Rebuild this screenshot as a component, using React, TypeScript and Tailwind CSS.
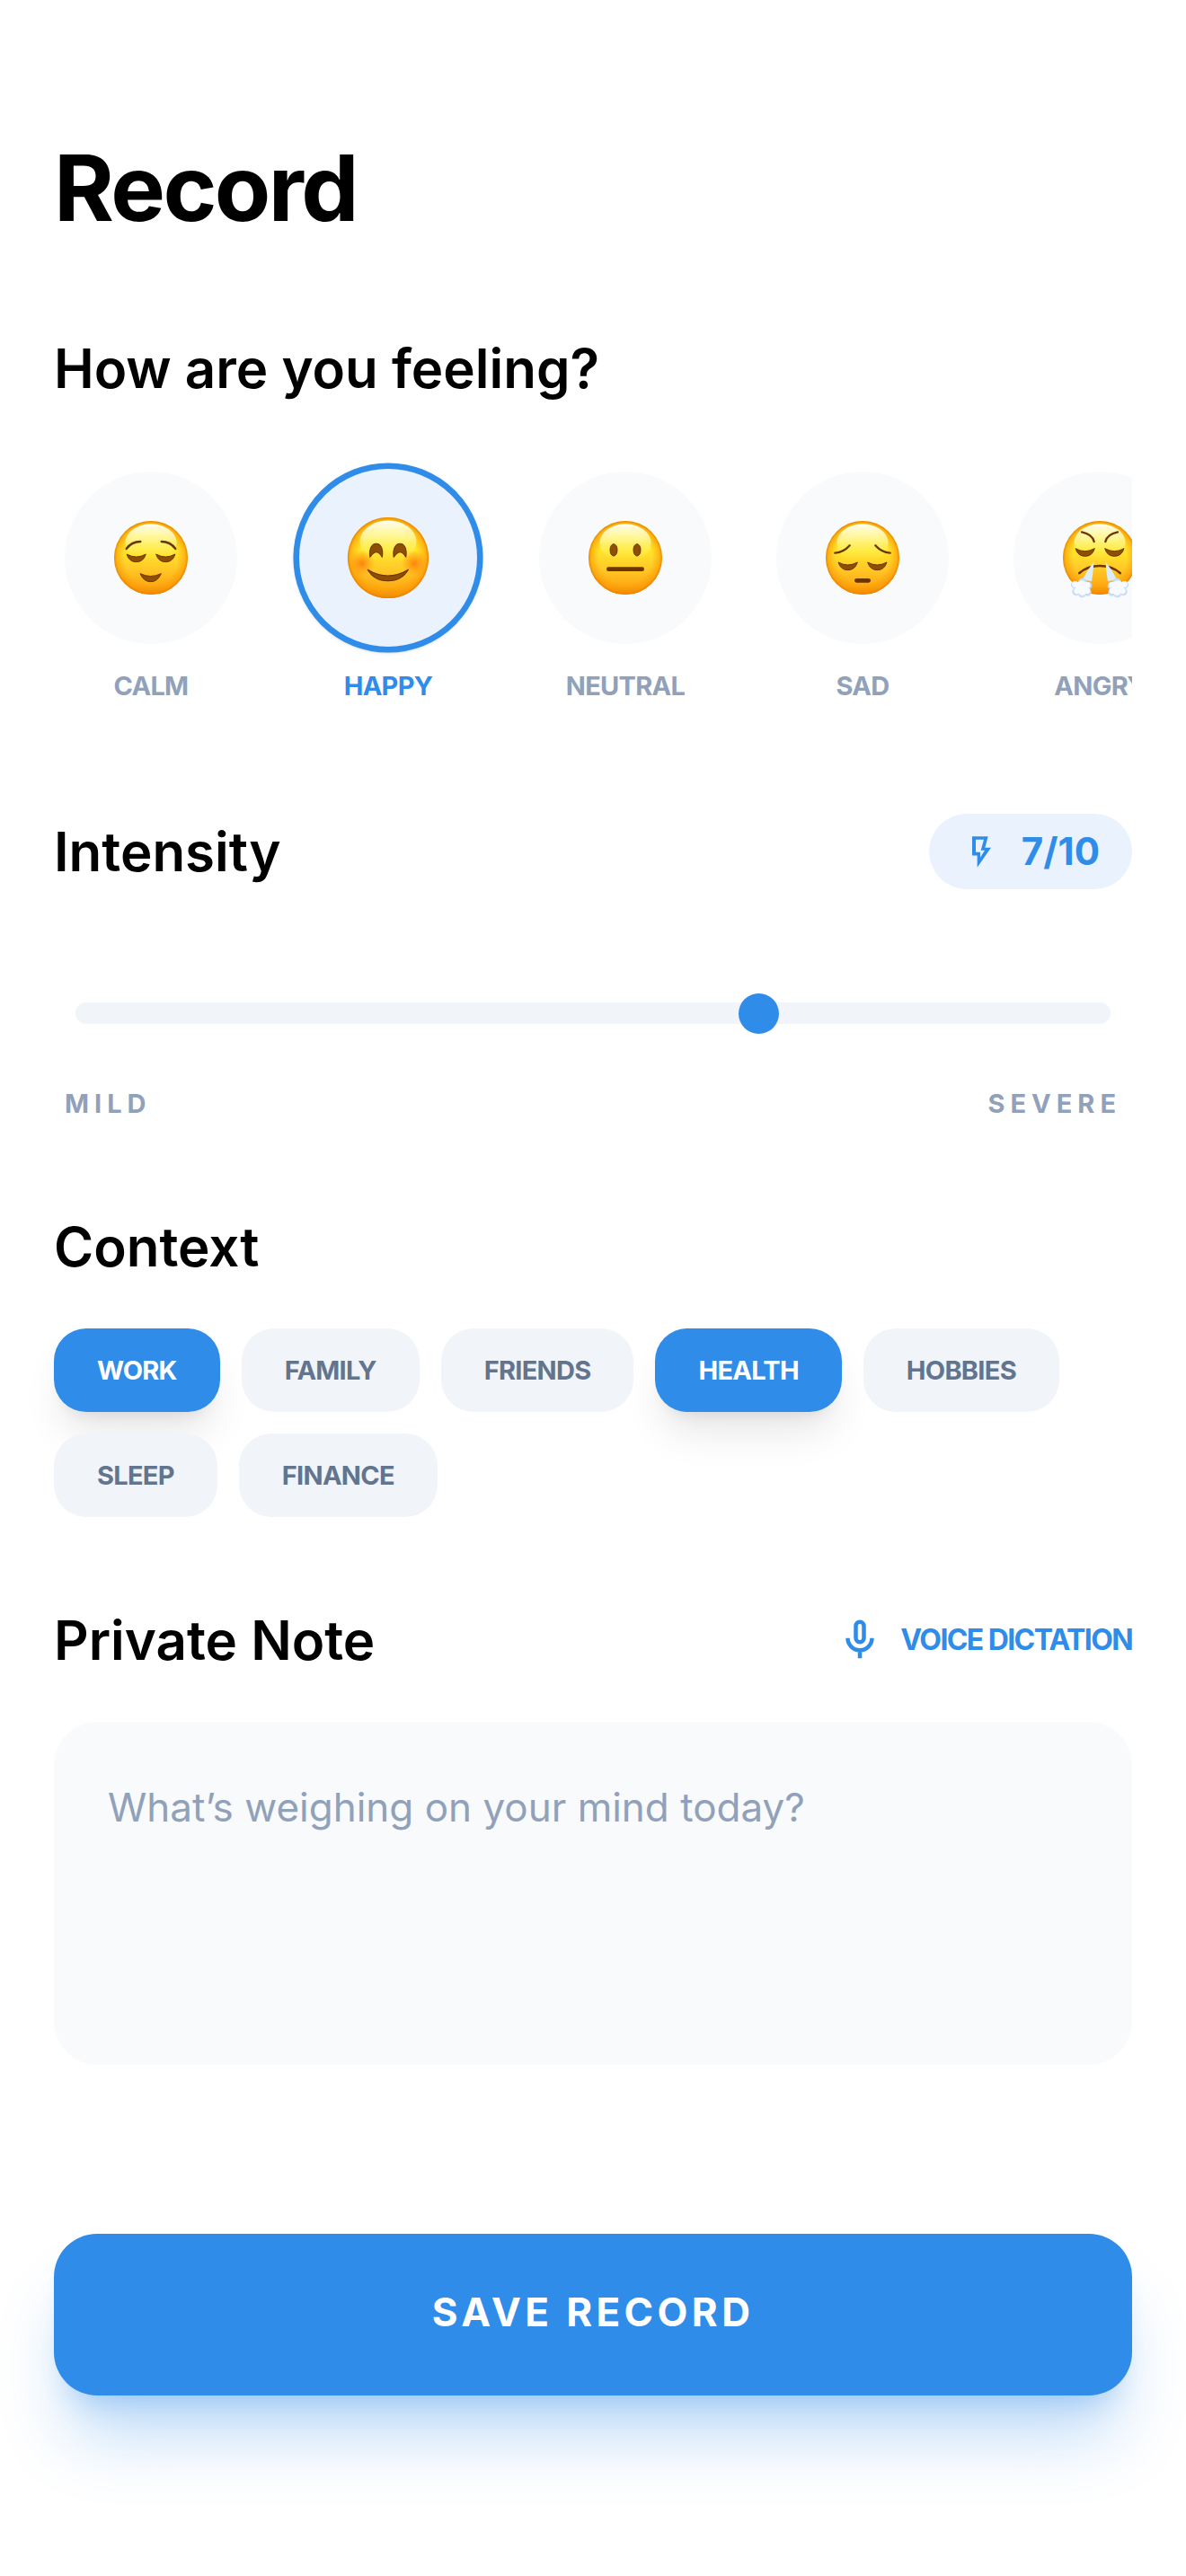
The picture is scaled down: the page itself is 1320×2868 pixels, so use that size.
import { useId, useState, type ReactNode } from 'react'
import { clsx } from 'clsx'

const INK = '#6b3500'

function Face({ children, blush = false }: { children: ReactNode; blush?: boolean }) {
  const id = useId()
  return (
    <svg viewBox="0 0 246 246" className="h-[82px] w-[82px] overflow-visible" aria-hidden="true">
      <defs>
        <linearGradient id={`${id}-body`} x1="0" y1="0" x2="0" y2="1">
          <stop offset="0" stopColor="#ffd91f" />
          <stop offset="0.4" stopColor="#ffe52b" />
          <stop offset="0.65" stopColor="#ffc927" />
          <stop offset="0.88" stopColor="#fda912" />
          <stop offset="1" stopColor="#e88a08" />
        </linearGradient>
        <radialGradient id={`${id}-rim`} cx="0.5" cy="0.5" r="0.5">
          <stop offset="0.72" stopColor="#ff9500" stopOpacity="0" />
          <stop offset="0.93" stopColor="#fb9200" stopOpacity="0.55" />
          <stop offset="1" stopColor="#e57c00" stopOpacity="0.9" />
        </radialGradient>
        <linearGradient id={`${id}-shine`} x1="0" y1="0" x2="0" y2="1">
          <stop offset="0" stopColor="#fffff2" />
          <stop offset="0.4" stopColor="#fffcae" stopOpacity="0.75" />
          <stop offset="1" stopColor="#fff23a" stopOpacity="0" />
        </linearGradient>
        <radialGradient id={`${id}-blush`}>
          <stop offset="0" stopColor="#ff7a0a" stopOpacity="0.9" />
          <stop offset="1" stopColor="#ff8a0a" stopOpacity="0" />
        </radialGradient>
      </defs>
      <circle cx="123" cy="123" r="123" fill={`url(#${id}-body)`} />
      <circle cx="123" cy="123" r="123" fill={`url(#${id}-rim)`} />
      <ellipse cx="123" cy="74" rx="86" ry="64" fill={`url(#${id}-shine)`} />
      {blush && (
        <>
          <circle cx="43" cy="140" r="40" fill={`url(#${id}-blush)`} />
          <circle cx="203" cy="140" r="40" fill={`url(#${id}-blush)`} />
        </>
      )}
      {children}
    </svg>
  )
}

function Brows({ d }: { d: string }) {
  return <path d={d} fill="none" stroke={INK} strokeWidth="7" strokeLinecap="round" />
}

function ClosedEyes({ y }: { y: number }) {
  return (
    <g fill="#8f4e05" stroke={INK} strokeWidth="3" strokeLinejoin="round" transform={`translate(0 ${y})`}>
      <path d="M42 0Q74 18 106 0Q98 26 74 26Q50 26 42 0Z" />
      <path d="M140 0Q172 18 204 0Q196 26 172 26Q148 26 140 0Z" />
    </g>
  )
}

function Steam({ flip = false }: { flip?: boolean }) {
  return (
    <g transform={flip ? 'translate(246 0) scale(-1 1)' : undefined}>
      <path d="M103 137Q80 165 66 195L96 202Q102 165 103 137Z" fill="#dcecff" />
      <g fill="#c6dcf8">
        <circle cx="40" cy="213" r="13" />
        <circle cx="44" cy="236" r="13" />
        <circle cx="64" cy="244" r="12" />
        <circle cx="82" cy="238" r="13" />
        <circle cx="84" cy="216" r="13" />
        <circle cx="66" cy="206" r="15" />
      </g>
      <g fill="#f7fbff">
        <circle cx="41" cy="212" r="10" />
        <circle cx="47" cy="233" r="10" />
        <circle cx="65" cy="238" r="11" />
        <circle cx="80" cy="233" r="10" />
        <circle cx="81" cy="214" r="10" />
        <circle cx="63" cy="218" r="19" />
      </g>
    </g>
  )
}

const moods = [
  {
    name: 'Calm',
    face: (
      <Face>
        <Brows d="M41 93Q58 69 88 69M205 93Q188 69 158 69" />
        <ClosedEyes y={111} />
        <path d="M87 176Q122 193 157 176Q145 203 122 203Q99 203 87 176Z" fill="#8f4e05" stroke={INK} strokeWidth="3" strokeLinejoin="round" />
      </Face>
    ),
  },
  {
    name: 'Happy',
    face: (
      <Face blush>
        <g fill="#8f4e05" stroke={INK} strokeWidth="3" strokeLinejoin="round">
          <path d="M68 121C64 95 74 80 87 80S109 95 105 121C100 114 96 106 87 106S74 114 68 121Z" />
          <path d="M140 121C136 95 146 80 159 80S181 95 177 121C172 114 168 106 159 106S146 114 140 121Z" />
          <path d="M61 159Q122 196 184 159Q165 193 122 193Q80 193 61 159Z" />
        </g>
      </Face>
    ),
  },
  {
    name: 'Neutral',
    face: (
      <Face>
        <g fill="#8f4e05" stroke={INK} strokeWidth="3">
          <ellipse cx="84" cy="97" rx="12" ry="20" />
          <ellipse cx="162" cy="97" rx="12" ry="20" />
        </g>
        <rect x="60" y="154" width="126" height="14" rx="7" fill={INK} />
      </Face>
    ),
  },
  {
    name: 'Sad',
    face: (
      <Face>
        <Brows d="M31 107Q60 105 80 82M215 107Q186 105 166 82" />
        <ClosedEyes y={138} />
        <rect x="96" y="192" width="54" height="14" rx="7" fill={INK} />
      </Face>
    ),
  },
  {
    name: 'Angry',
    face: (
      <Face>
        <Brows d="M63 37Q98 44 104 69M183 37Q148 44 142 69" />
        <ClosedEyes y={92} />
        <path d="M55 174Q82 150 123 150Q164 150 191 174" fill="none" stroke={INK} strokeWidth="8" strokeLinecap="round" />
        <Steam />
        <Steam flip />
      </Face>
    ),
  },
]

const contexts = ['Work', 'Family', 'Friends', 'Health', 'Hobbies', 'Sleep', 'Finance']

function BoltIcon() {
  return (
    <svg viewBox="0 0 63 104" className="h-[35px] w-[21px]" fill="currentColor" fillRule="evenodd" aria-hidden="true">
      <path d="M0 0H53L43 38H63L17 104V64H0ZM12 11V53H27V71L42 47H29L39 11Z" />
    </svg>
  )
}

function MicIcon() {
  return (
    <svg viewBox="0 0 24 24" className="h-[54px] w-[54px]" fill="none" stroke="currentColor" strokeWidth="2" aria-hidden="true">
      <rect x="10" y="3" width="4" height="10" rx="2" />
      <path d="M6 11a6 6 0 0 0 12 0M12 17v4" />
    </svg>
  )
}

export default function App() {
  const [mood, setMood] = useState('Happy')
  const [intensity, setIntensity] = useState(7)
  const [selected, setSelected] = useState(['Work', 'Health'])
  const [note, setNote] = useState('')

  const toggle = (name: string) =>
    setSelected((prev) => (prev.includes(name) ? prev.filter((c) => c !== name) : [...prev, name]))

  return (
    <main className="min-h-screen bg-white px-[60px] pt-[149px] pb-[120px] font-['Inter',sans-serif] text-black">
      <h1 className="text-[102px] leading-[120px] font-bold tracking-tight">Record</h1>

      <section className="mt-[105px]">
        <h2 className="text-[60px] leading-[72px] font-semibold">How are you feeling?</h2>
        <div className="mt-[55px] flex gap-[72px] overflow-x-auto px-3 py-6 [scrollbar-width:none]">
          {moods.map(({ name, face }) => {
            const active = name === mood
            return (
              <button
                key={name}
                type="button"
                aria-pressed={active}
                onClick={() => setMood(name)}
                className="flex w-48 shrink-0 flex-col items-center gap-6"
              >
                <span
                  className={clsx(
                    'flex h-48 w-48 items-center justify-center rounded-full',
                    active ? 'scale-110 border-[6px] border-[#308ce9] bg-[#eaf2fd] shadow-sm' : 'bg-slate-50',
                  )}
                >
                  {face}
                </span>
                <span
                  className={clsx(
                    'text-[29px] leading-[45px] font-bold tracking-tight uppercase',
                    active ? 'text-[#308ce9]' : 'text-slate-400',
                  )}
                >
                  {name}
                </span>
              </button>
            )
          })}
        </div>
      </section>

      <section className="mt-24">
        <div className="flex items-center justify-between">
          <h2 className="text-[60px] leading-[72px] font-semibold">
            <label htmlFor="intensity">Intensity</label>
          </h2>
          <div className="flex h-[84px] items-center gap-[34px] rounded-full bg-[#eaf2fd] pr-9 pl-12 text-[#308ce9]">
            <BoltIcon />
            <span className="text-[42px] leading-[60px] font-bold">{intensity}/10</span>
          </div>
        </div>
        <input
          id="intensity"
          type="range"
          min={1}
          max={10}
          value={intensity}
          onChange={(e) => setIntensity(Number(e.target.value))}
          className="mx-6 mt-[126px] block h-6 w-[calc(100%-48px)] appearance-none rounded-full bg-slate-100 [&::-webkit-slider-thumb]:h-[45px] [&::-webkit-slider-thumb]:w-[45px] [&::-webkit-slider-thumb]:appearance-none [&::-webkit-slider-thumb]:rounded-full [&::-webkit-slider-thumb]:bg-[#308ce9]"
        />
        <div className="mt-[66px] flex justify-between px-3 text-[29px] leading-[45px] font-bold tracking-[6px] text-slate-400 uppercase">
          <span>Mild</span>
          <span>Severe</span>
        </div>
      </section>

      <section className="mt-[101px]">
        <h2 className="text-[60px] leading-[72px] font-semibold">Context</h2>
        <div className="mt-[55px] flex flex-wrap gap-6">
          {contexts.map((name) => {
            const active = selected.includes(name)
            return (
              <button
                key={name}
                type="button"
                aria-pressed={active}
                onClick={() => toggle(name)}
                className={clsx(
                  'rounded-[36px] px-12 py-6 text-[29px] leading-[45px] font-bold tracking-tight uppercase',
                  active
                    ? 'bg-[#308ce9] text-white shadow-[0_30px_45px_-9px_rgba(0,0,0,0.1),0_12px_18px_-12px_rgba(0,0,0,0.1)]'
                    : 'bg-slate-100 text-slate-500',
                )}
              >
                {name}
              </button>
            )
          })}
        </div>
      </section>

      <section className="mt-[101px]">
        <div className="flex items-center justify-between">
          <h2 className="text-[60px] leading-[72px] font-semibold">
            <label htmlFor="note">Private Note</label>
          </h2>
          <button type="button" className="flex items-center gap-[18px] text-[#308ce9]">
            <MicIcon />
            <span className="text-[32px] leading-[48px] font-bold tracking-tighter uppercase">Voice Dictation</span>
          </button>
        </div>
        <textarea
          id="note"
          value={note}
          onChange={(e) => setNote(e.target.value)}
          placeholder="What’s weighing on your mind today?"
          className="mt-[55px] block h-[382px] w-full resize-none rounded-[48px] bg-slate-50 p-[60px] text-[44px] leading-[70px] placeholder:text-slate-400"
        />
      </section>

      <button
        type="submit"
        className="mt-[188px] flex w-full items-center justify-center rounded-[48px] bg-[#308ce9] pt-[57px] pb-[63px] text-[44px] leading-[60px] font-bold tracking-widest text-white uppercase shadow-[0_60px_75px_-15px_rgba(48,140,233,0.3),0_24px_30px_-18px_rgba(48,140,233,0.3)]"
      >
        Save Record
      </button>
    </main>
  )
}
